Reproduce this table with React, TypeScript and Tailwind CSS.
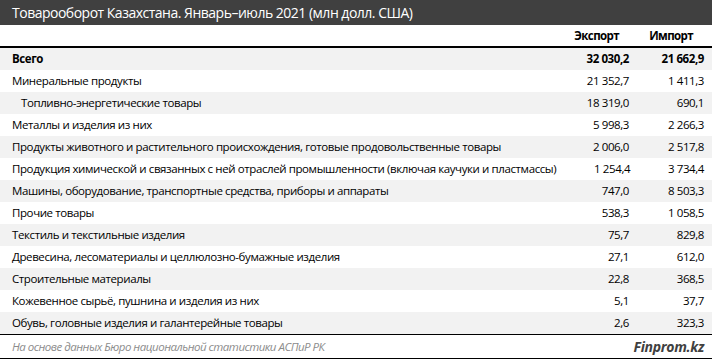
import React from "react";

interface Row {
  name: string;
  exp: string;
  imp: string;
  bold?: boolean;
  indent?: boolean;
}

const rows: Row[] = [
  { name: "Всего", exp: "32 030,2", imp: "21 662,9", bold: true },
  { name: "Минеральные продукты", exp: "21 352,7", imp: "1 411,3" },
  { name: "Топливно-энергетические товары", exp: "18 319,0", imp: "690,1", indent: true },
  { name: "Металлы и изделия из них", exp: "5 998,3", imp: "2 266,3" },
  { name: "Продукты животного и растительного происхождения, готовые продовольственные товары", exp: "2 006,0", imp: "2 517,8" },
  { name: "Продукция химической и связанных с ней отраслей промышленности (включая каучуки и пластмассы)", exp: "1 254,4", imp: "3 734,4" },
  { name: "Машины, оборудование, транспортные средства, приборы и аппараты", exp: "747,0", imp: "8 503,3" },
  { name: "Прочие товары", exp: "538,3", imp: "1 058,5" },
  { name: "Текстиль и текстильные изделия", exp: "75,7", imp: "829,8" },
  { name: "Древесина, лесоматериалы и целлюлозно-бумажные изделия", exp: "27,1", imp: "612,0" },
  { name: "Строительные материалы", exp: "22,8", imp: "368,5" },
  { name: "Кожевенное сырьё, пушнина и изделия из них", exp: "5,1", imp: "37,7" },
  { name: "Обувь, головные изделия и галантерейные товары", exp: "2,6", imp: "323,3" },
];

const App: React.FC = () => {
  return (
    <div className="w-[712px] h-[359px] bg-white text-black font-['Open_Sans',sans-serif] text-[11.5px] overflow-hidden">
      {/* title */}
      <div className="h-[25px] bg-[#404040] text-white text-[14px] tracking-[-0.5px] pl-3 flex items-center">
        Товарооборот Казахстана. Январь–июль 2021 (млн долл. США)
      </div>
      {/* header */}
      <div className="h-[21px] flex items-center font-bold tracking-[-0.6px]">
        <div className="flex-1" />
        <div className="w-[75px] text-right pr-[10px]">Экспорт</div>
        <div className="w-[75px] text-right pr-[11px] mr-2">Импорт</div>
      </div>
      <div className="h-[1.5px] bg-black" />
      {rows.map((r, i) => (
        <div
          key={r.name}
          className={`h-[22px] flex items-center tracking-[-0.4px] ${i % 2 === 0 ? "bg-[#f2f2f2]" : "bg-white"} ${r.bold ? "font-bold" : ""}`}
        >
          <div className={`flex-1 whitespace-nowrap ${r.indent ? "pl-[21px]" : "pl-3"}`}>{r.name}</div>
          <div className="w-[75px] text-right">{r.exp}</div>
          <div className="w-[75px] text-right mr-2">{r.imp}</div>
        </div>
      ))}
      <div className="h-[1.5px] bg-black" />
      <div className="h-[23px] flex items-center justify-between pl-3 pr-2">
        <span className="italic text-[#8c8c8c] text-[11.5px] tracking-[-0.5px]">На основе данных Бюро национальной статистики АСПиР РК</span>
        <span className="italic font-bold text-[#404040] text-[14px] tracking-[-0.3px]">Finprom.kz</span>
      </div>
      <div className="h-[1.5px] bg-black" />
    </div>
  );
};

export default App;
